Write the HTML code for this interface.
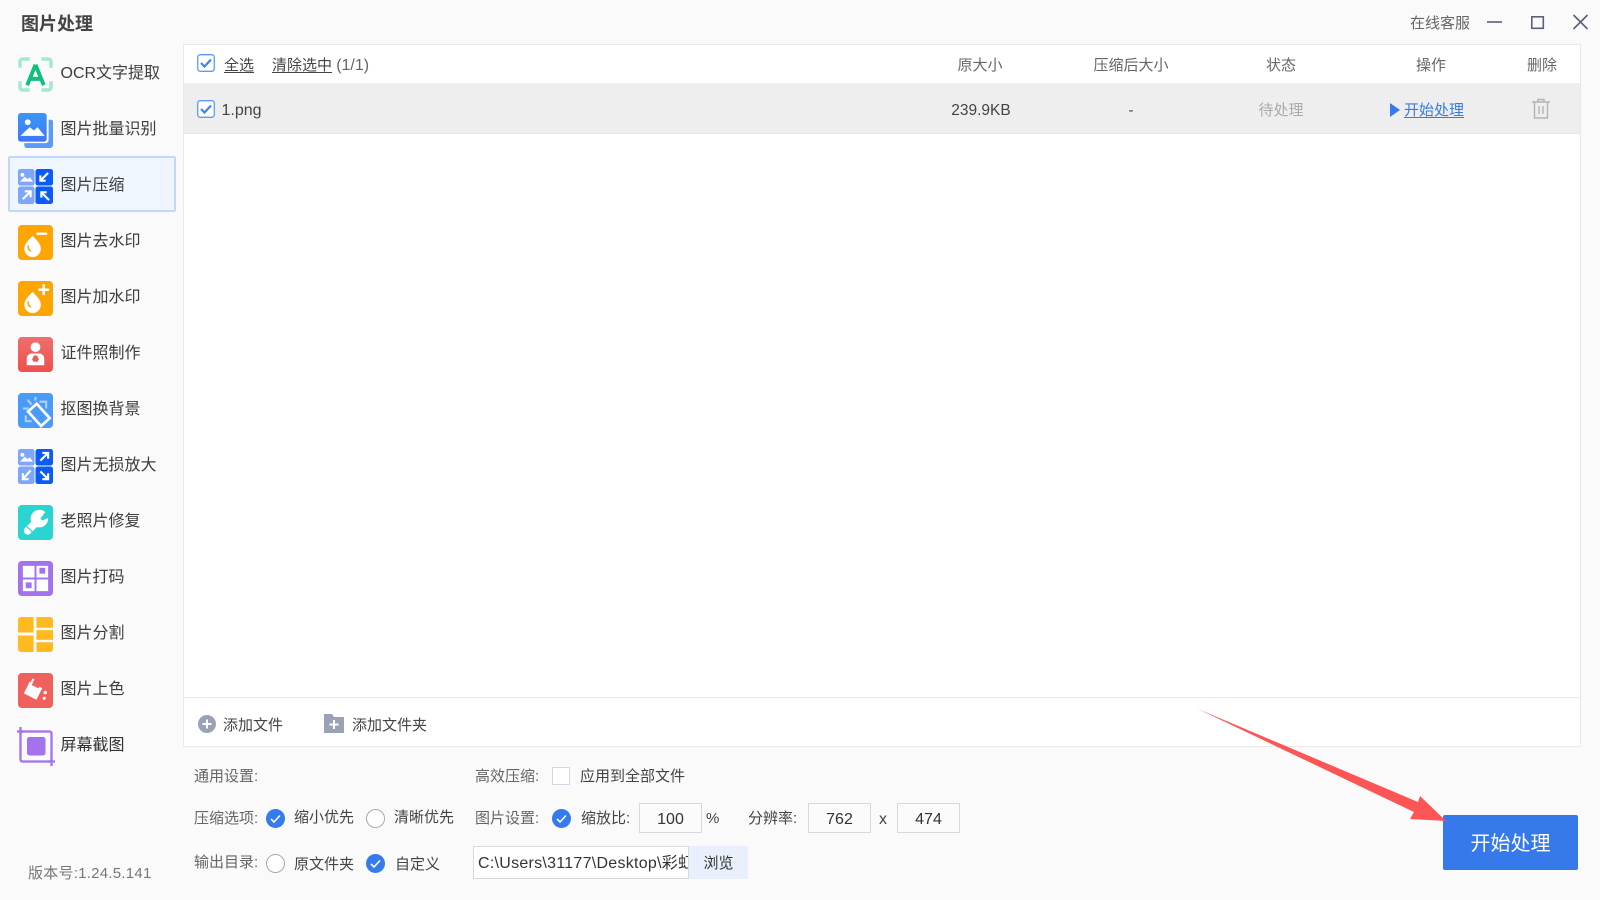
<!DOCTYPE html>
<html lang="zh-CN">
<head>
<meta charset="utf-8">
<title>图片处理</title>
<style>
html,body{margin:0;padding:0;width:1600px;height:900px;overflow:hidden;background:#fafafa;}
body{position:relative;font-family:"Liberation Sans","Noto Sans CJK SC",sans-serif;color:#444;font-size:15px;}
.t{position:absolute;line-height:20px;height:20px;white-space:nowrap;}
.c{transform:translateX(-50%);}
.nav{font-size:16px;left:60.5px;color:#3d3d3d;}
.ico{position:absolute;left:18px;width:35px;height:35px;}
.s{position:absolute;}
.g{color:#666;}
.sel{position:absolute;left:8px;top:156px;width:164px;height:52px;background:#f0f6ff;border:2px solid #bfd8fb;border-radius:2px;}
.panel{position:absolute;left:183px;top:44px;width:1396px;height:701px;background:#fff;border:1px solid #e9e9e9;}
.row{position:absolute;left:184px;top:83px;width:1396px;height:50px;background:#eee;border-bottom:1px solid #e6e6e6;}
.line{position:absolute;left:184px;top:697px;width:1396px;height:1px;background:#e8e8e8;}
.inp{position:absolute;box-sizing:border-box;border:1px solid #d9d9d9;background:#fbfbfb;text-align:center;line-height:31px;color:#333;font-size:16px;height:30px;width:63px;top:803px;}
.path{position:absolute;box-sizing:border-box;left:473px;top:846px;width:216px;height:33px;border:1px solid #d9d9d9;background:#fff;font-size:16px;line-height:33px;letter-spacing:.27px;padding-left:4px;overflow:hidden;white-space:nowrap;color:#333;}
.browse{position:absolute;left:689px;top:846px;width:59px;height:33px;background:#e9f0fc;text-align:center;line-height:35px;color:#333;}
.btn{position:absolute;left:1443px;top:815px;width:135px;height:55px;background:#3579ea;border-radius:2px;color:#fff;font-size:20px;text-align:center;line-height:59px;}
u{text-underline-offset:2px;}
</style>
</head>
<body>
<div class="t" style="left:21px;top:14px;font-size:18px;font-weight:700;color:#444;">图片处理</div>

<div class="sel"></div>

<svg class="ico" style="top:57px" viewBox="0 0 36 36"><g fill="none" stroke="#a6e8cd" stroke-width="3.600"><path d="M2 11V5a3 3 0 0 1 3-3h7"/><path d="M24 2h7a3 3 0 0 1 3 3v6"/><path d="M2 25v6a3 3 0 0 0 3 3h7"/><path d="M34 25v6a3 3 0 0 1-3 3h-7"/></g><path d="M18 8L9.500 29M18 8l8.500 21M13 22.500h10" stroke="#0fc07f" stroke-width="4" fill="none"/></svg>
<div class="t nav" style="top:64px">OCR文字提取</div>

<svg class="ico" style="top:113px" viewBox="0 0 36 36"><defs><linearGradient id="bl" x1="0" y1="0" x2="0" y2="1"><stop offset="0" stop-color="#3b97f5"/><stop offset="1" stop-color="#3c78fa"/></linearGradient></defs><path d="M6.500 7H34a2 2 0 0 1 2 2v24a3 3 0 0 1-3 3H9a2.500 2.500 0 0 1-2.500-2.500z" fill="#5b9bf8"/><rect x="0" y="0" width="31.500" height="31" rx="3" fill="#fafafa"/><rect x="0" y="0" width="29.500" height="29.500" rx="3" fill="url(#bl)"/><circle cx="10" cy="9.500" r="3" fill="#fff"/><path d="M2.500 23.500L12 14.500l4.500 3.500 3.500-3.500 7.500 9z" fill="#fff"/></svg>
<div class="t nav" style="top:120px">图片批量识别</div>

<svg class="ico" style="top:169px" viewBox="0 0 36 36"><rect x="0" y="0" width="17" height="17" rx="2.500" fill="#7ea7fb"/><rect x="18" y="0" width="18" height="17" rx="2.500" fill="#0a5cf5"/><rect x="0" y="18" width="17" height="18" rx="2.500" fill="#7ea7fb"/><rect x="18" y="18" width="18" height="18" rx="2.500" fill="#0a5cf5"/><circle cx="4.500" cy="6" r="2" fill="#fff"/><path d="M2 13l5-5 3 2.500 2-2 3.500 4.500z" fill="#fff"/><g fill="none" stroke="#fff" stroke-width="2.200"><path d="M31 4l-8 8M23 6.500V12h5.500"/><path d="M5 31l8-8M7 23h6v6"/><path d="M32 32l-8-8M24 29.500V24h5.500"/></g></svg>
<div class="t nav" style="top:176px">图片压缩</div>

<svg class="ico" style="top:225px" viewBox="0 0 36 36"><rect width="36" height="36" rx="4" fill="#ffa502"/><path d="M15 11c4 4.500 8.500 8 8.500 13.500a8.500 8.500 0 0 1-17 0C6.500 19 11 15.500 15 11z" fill="#fff"/><path d="M19 9h11" stroke="#fff" stroke-width="2.400"/><path d="M10.500 21c-.5 3 .5 5 3 6" stroke="#ffa502" stroke-width="1.500" fill="none"/></svg>
<div class="t nav" style="top:232px">图片去水印</div>

<svg class="ico" style="top:281px" viewBox="0 0 36 36"><rect width="36" height="36" rx="4" fill="#ffa502"/><path d="M15 11c4 4.500 8.500 8 8.500 13.500a8.500 8.500 0 0 1-17 0C6.500 19 11 15.500 15 11z" fill="#fff"/><path d="M21 9h11M26.500 3.500v11" stroke="#fff" stroke-width="2.600"/><path d="M10.500 21c-.5 3 .5 5 3 6" stroke="#ffa502" stroke-width="1.500" fill="none"/></svg>
<div class="t nav" style="top:288px">图片加水印</div>

<svg class="ico" style="top:337px" viewBox="0 0 36 36"><defs><linearGradient id="rd" x1="0" y1="0" x2="0" y2="1"><stop offset="0" stop-color="#ef6f6c"/><stop offset="1" stop-color="#ef504d"/></linearGradient></defs><rect width="36" height="36" rx="4" fill="url(#rd)"/><circle cx="18" cy="10.500" r="5" fill="#fff"/><path d="M9 29v-7a5 5 0 0 1 5-5h8a5 5 0 0 1 5 5v7z" fill="#fff"/><path d="M16.500 19h3l.8 1.500 1.200 2.500-1.500 2.500h-4L14.500 23l1.200-2.500z" fill="#ef5a57"/></svg>
<div class="t nav" style="top:344px">证件照制作</div>

<svg class="ico" style="top:393px" viewBox="0 0 36 36"><rect width="36" height="36" rx="4" fill="#4a9af8"/><rect x="15.500" y="12.500" width="12" height="20" fill="none" stroke="#fff" stroke-width="2.800" transform="rotate(-42 21.500 22.500)"/><g fill="none" stroke="#a9d0fb" stroke-width="2.200"><path d="M5 16h6M10 7l4 5M18 4v4"/><path d="M8 23v6h6"/><path d="M22 9h7v7"/></g></svg>
<div class="t nav" style="top:400px">抠图换背景</div>

<svg class="ico" style="top:449px" viewBox="0 0 36 36"><rect x="0" y="0" width="17" height="17" rx="2.500" fill="#7ea7fb"/><rect x="18" y="0" width="18" height="17" rx="2.500" fill="#0a5cf5"/><rect x="0" y="18" width="17" height="18" rx="2.500" fill="#7ea7fb"/><rect x="18" y="18" width="18" height="18" rx="2.500" fill="#0a5cf5"/><circle cx="4.500" cy="6" r="2" fill="#fff"/><path d="M2 13l5-5 3 2.500 2-2 3.500 4.500z" fill="#fff"/><g fill="none" stroke="#fff" stroke-width="2.200"><path d="M23 12l8-8M25 4h6v6"/><path d="M13 22l-8 9M5 25v6h6"/><path d="M23 23l8 8M31 25v6h-6"/></g></svg>
<div class="t nav" style="top:456px">图片无损放大</div>

<svg class="ico" style="top:505px" viewBox="0 0 36 36"><rect width="36" height="36" rx="4" fill="#2ad4d1"/><path d="M10 26.500L18 18.500" stroke="#fff" stroke-width="8" stroke-linecap="round"/><circle cx="22" cy="14" r="9" fill="#fff"/><path d="M23 14L29.500 5.500L33 12.500L25 16z" fill="#2ad4d1"/><path d="M8 21l7 7" stroke="#2ad4d1" stroke-width="1.200"/></svg>
<div class="t nav" style="top:512px">老照片修复</div>

<svg class="ico" style="top:561px" viewBox="0 0 36 36"><rect width="36" height="36" rx="4" fill="#a372ec"/><rect x="5" y="5" width="12" height="12" fill="#fff"/><rect x="19" y="5" width="12" height="12" fill="#fff"/><rect x="22" y="7" width="6" height="6" fill="#a372ec"/><rect x="5" y="19" width="12" height="12" fill="#fff"/><rect x="8" y="22" width="6" height="6" fill="#a372ec"/><rect x="19" y="19" width="12" height="12" fill="#fff"/></svg>
<div class="t nav" style="top:568px">图片打码</div>

<svg class="ico" style="top:617px" viewBox="0 0 36 36"><path d="M3 0h13v16H0V3a3 3 0 0 1 3-3z" fill="#ffba1f"/><path d="M19 0h14a3 3 0 0 1 3 3v8H19z" fill="#ffba1f"/><rect x="19" y="13.500" width="17" height="10" fill="#ffba1f"/><path d="M19 26h17v7a3 3 0 0 1-3 3H19z" fill="#ffba1f"/><path d="M0 19h16v17H3a3 3 0 0 1-3-3z" fill="#ffba1f"/></svg>
<div class="t nav" style="top:624px">图片分割</div>

<svg class="ico" style="top:673px" viewBox="0 0 36 36"><rect width="36" height="36" rx="4" fill="#f0605c"/><path d="M12 9l13 6.500-6 12-13-6.500z" fill="#fff"/><path d="M16 6l-3 6" stroke="#fff" stroke-width="2"/><path d="M15 10.500l7 3.500-1 1.800-7-3.500z" fill="#f0605c"/><circle cx="28" cy="20" r="1.800" fill="#fff"/><circle cx="27" cy="26" r="1.600" fill="#fff"/></svg>
<div class="t nav" style="top:680px">图片上色</div>

<svg class="s" style="top:727px;left:17px" width="38" height="39" viewBox="0 0 38 39"><rect x="3.500" y="4.500" width="31" height="30" rx="2" fill="none" stroke="#a372ec" stroke-width="2.300"/><path d="M3.500 0v7M0 4.500h7M34.500 39v-7M38 34.500h-7" stroke="#a372ec" stroke-width="2.300" fill="none"/><rect x="10" y="10" width="18.500" height="18.500" rx="2.500" fill="#a372ec"/></svg>
<div class="t nav" style="top:736px;color:#333">屏幕截图</div>

<div class="t" style="left:28px;top:864px;color:#777;letter-spacing:.25px">版本号:1.24.5.141</div>

<!-- top right -->
<div class="t g" style="left:1410px;top:14px">在线客服</div>
<svg class="s" style="left:1484px;top:12px" width="106" height="20" viewBox="0 0 106 20"><g fill="none" stroke="#5a6275" stroke-width="1.600"><path d="M3 10h15"/><rect x="47.800" y="4.800" width="11.500" height="11.500"/><path d="M89.500 3l14 14M103.500 3l-14 14"/></g></svg>

<!-- table -->
<div class="panel"></div>
<div class="row"></div>
<div class="line"></div>

<svg class="s" style="left:197px;top:54px" width="18" height="18" viewBox="0 0 18 18"><rect x=".7" y=".7" width="16.600" height="16.600" rx="2.500" fill="#fff" stroke="#5a9bf5" stroke-width="1.300"/><path d="M4 9l3.500 3.500L14 5.500" fill="none" stroke="#3d85f0" stroke-width="2.200"/></svg>
<div class="t" style="left:224px;top:56px"><u>全选</u></div>
<div class="t" style="left:272px;top:56px"><u>清除选中</u> <span class="g" style="font-size:16px">(1/1)</span></div>
<div class="t c g" style="left:980px;top:56px">原大小</div>
<div class="t c g" style="left:1131px;top:56px">压缩后大小</div>
<div class="t c g" style="left:1281px;top:56px">状态</div>
<div class="t c g" style="left:1431px;top:56px">操作</div>
<div class="t c g" style="left:1542px;top:56px">删除</div>

<svg class="s" style="left:197px;top:100px" width="18" height="18" viewBox="0 0 18 18"><rect x=".7" y=".7" width="16.600" height="16.600" rx="2.500" fill="#fff" stroke="#5a9bf5" stroke-width="1.300"/><path d="M4 9l3.500 3.500L14 5.500" fill="none" stroke="#3d85f0" stroke-width="2.200"/></svg>
<div class="t" style="left:221.5px;top:101px;font-size:16px">1.png</div>
<div class="t c" style="left:981px;top:101px;font-size:15.500px">239.9KB</div>
<div class="t c" style="left:1131px;top:101px">-</div>
<div class="t c" style="left:1281px;top:101px;color:#aaa">待处理</div>
<svg class="s" style="left:1390px;top:102px" width="10" height="16" viewBox="0 0 10 16"><path d="M0 1l10 7-10 7z" fill="#357bee"/></svg>
<div class="t" style="left:1404px;top:100.500px;color:#357bee"><u>开始处理</u></div>
<svg class="s" style="left:1531px;top:98px" width="20" height="21" viewBox="0 0 20 21"><g fill="none" stroke="#b3b3b3" stroke-width="1.400"><path d="M1 4h18M7 4V1.500h6V4"/><path d="M3.500 4v16h13V4"/><path d="M8 8v8M12 8v8"/></g></svg>

<!-- footer -->
<svg class="s" style="left:198px;top:715px" width="18" height="18" viewBox="0 0 18 18"><circle cx="9" cy="9" r="9" fill="#9aa3b5"/><path d="M9 4.500v9M4.500 9h9" stroke="#fff" stroke-width="2"/></svg>
<div class="t" style="left:223px;top:716px">添加文件</div>
<svg class="s" style="left:324px;top:714px" width="20" height="19" viewBox="0 0 20 19"><path d="M0 0h8l2 3h10v16H0z" fill="#9aa3b5"/><path d="M10 6v9M5.500 10.500h9" stroke="#fff" stroke-width="2"/></svg>
<div class="t" style="left:352px;top:716px">添加文件夹</div>

<!-- settings -->
<div class="t g" style="left:194px;top:767px">通用设置:</div>
<div class="t g" style="left:475px;top:767px">高效压缩:</div>
<div class="s" style="left:552px;top:767px;width:16px;height:16px;border:1px solid #d3d6e4;background:#fff;"></div>
<div class="t" style="left:580px;top:767px">应用到全部文件</div>

<div class="t g" style="left:194px;top:809px">压缩选项:</div>
<svg class="s" style="left:266px;top:809px" width="19" height="19" viewBox="0 0 19 19"><circle cx="9.500" cy="9.500" r="9.500" fill="#357bee"/><path d="M5 10l3 3 6-6.500" fill="none" stroke="#fff" stroke-width="1.600"/></svg>
<div class="t" style="left:294px;top:808px">缩小优先</div>
<div class="s" style="left:366px;top:809px;width:17px;height:17px;border:1px solid #a8a8a8;border-radius:50%;background:#fff;"></div>
<div class="t" style="left:394px;top:808px">清晰优先</div>
<div class="t g" style="left:475px;top:809px">图片设置:</div>
<svg class="s" style="left:552px;top:809px" width="19" height="19" viewBox="0 0 19 19"><circle cx="9.500" cy="9.500" r="9.500" fill="#357bee"/><path d="M5 10l3 3 6-6.500" fill="none" stroke="#fff" stroke-width="1.600"/></svg>
<div class="t" style="left:581px;top:809px">缩放比:</div>
<div class="inp" style="left:639px">100</div>
<div class="t" style="left:706px;top:809px">%</div>
<div class="t" style="left:748px;top:809px">分辨率:</div>
<div class="inp" style="left:808px">762</div>
<div class="t" style="left:879px;top:810px;font-size:16px">x</div>
<div class="inp" style="left:897px">474</div>

<div class="t g" style="left:194px;top:853px">输出目录:</div>
<div class="s" style="left:266px;top:854px;width:17px;height:17px;border:1px solid #a8a8a8;border-radius:50%;background:#fff;"></div>
<div class="t" style="left:294px;top:855px">原文件夹</div>
<svg class="s" style="left:366px;top:854px" width="19" height="19" viewBox="0 0 19 19"><circle cx="9.500" cy="9.500" r="9.500" fill="#357bee"/><path d="M5 10l3 3 6-6.500" fill="none" stroke="#fff" stroke-width="1.600"/></svg>
<div class="t" style="left:395px;top:855px">自定义</div>
<div class="path">C:\Users\31177\Desktop\彩虹</div>
<div class="browse">浏览</div>

<div class="btn">开始处理</div>

<svg class="s" style="left:1190px;top:700px" width="270" height="130" viewBox="1190 700 270 130"><path d="M1198 709L1418 802L1420 796L1446 821L1410 819L1414 812Z" fill="#fb5555"/></svg>
</body>
</html>
